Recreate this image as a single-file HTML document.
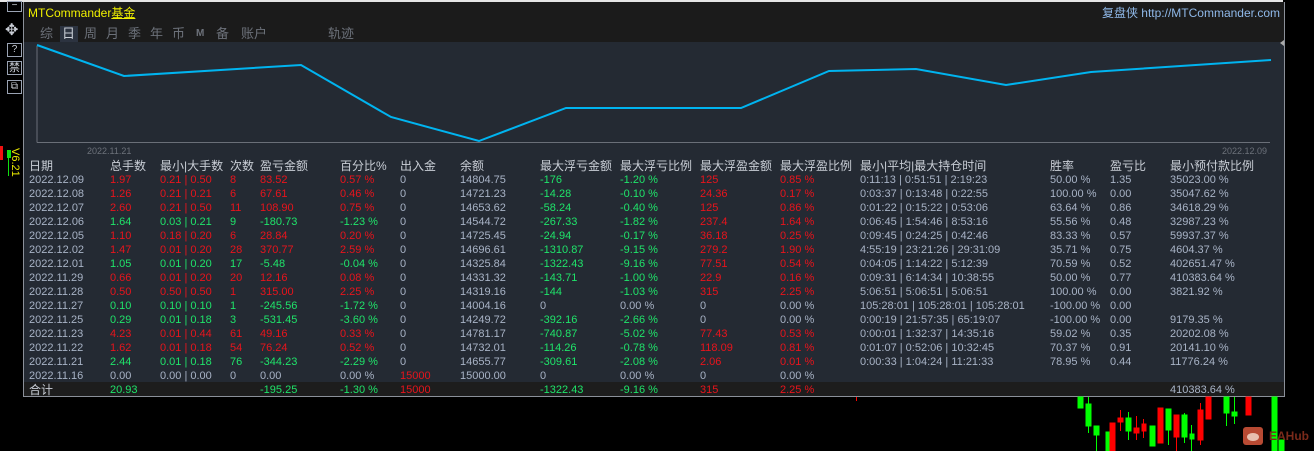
<!DOCTYPE html>
<html><head><meta charset="utf-8"><style>
*{margin:0;padding:0}
body{width:1314px;height:451px;background:#000;position:relative;overflow:hidden;font-family:"Liberation Sans","Noto Sans CJK SC",sans-serif;font-size:12px;}
.panel{position:absolute;left:23px;top:2px;width:1260px;height:394px;background:#242a33;border:1px solid #8b9099;border-top:none;}
.hdr{position:absolute;left:0;top:0;width:1260px;height:40px;background:#1b1b1b;}
.t{position:absolute;white-space:nowrap;line-height:14px;}
.r{color:#e8141c}.g{color:#1fe46a}.w{color:#a8b3c6}.h{color:#c9ced6}
.row{position:absolute;left:0;width:1260px;height:14px;font-size:11px}
.row.h{font-size:12px}
.row span{position:absolute;top:0;white-space:nowrap;line-height:14px}
.tot{position:absolute;left:0;top:380px;width:1260px;height:14px;background:#1d1d1d}
.ic{position:absolute;left:7px;width:13px;height:12px;border:1px solid #9aa3b3;color:#c8ccd4;font-size:10px;line-height:12px;text-align:center}
</style></head><body>
<div style="position:absolute;left:0;top:0;width:1314px;height:2px;background:#e6e6e6"></div>
<div style="position:absolute;left:1283px;top:0;width:31px;height:2px;background:#000"></div>
<div class="ic" style="top:1px;height:9px;line-height:8px">−</div>
<div class="t" style="left:5px;top:24px;color:#c8ccd4;font-size:16px">✥</div>
<div class="ic" style="top:43px">?</div>
<div class="ic" style="top:61px;font-size:11px">禁</div>
<div class="ic" style="top:80px">⧉</div>
<div style="position:absolute;left:0;top:146px;width:3px;height:14px;background:#f01010"></div>
<div style="position:absolute;left:7px;top:150px;width:4px;height:8px;background:#10e010"></div>
<div style="position:absolute;left:8px;top:158px;width:1px;height:18px;background:#10e010"></div>
<div class="t" style="left:22px;top:148px;color:#e8e800;font-size:11px;transform:rotate(90deg);transform-origin:0 0">V6.21</div>

<div class="panel">
 <div class="hdr">
  <div class="t" style="left:4px;top:4px;color:#f0f000">MTCommander<span style="text-decoration:underline">基金</span></div>
  <div class="t" style="right:4px;top:4px;color:#8fb8e8">复盘侠 http://MTCommander.com</div>
  <div class="t" style="left:16px;top:25px;color:#6c717a;font-size:13px">综</div>
  <div style="position:absolute;left:36px;top:24px;width:18px;height:16px;background:#2c3340"></div>
  <div class="t" style="left:38px;top:25px;color:#c9ced6;font-size:13px">日</div>
  <div class="t" style="left:60px;top:25px;color:#6c717a;font-size:13px">周</div>
  <div class="t" style="left:82px;top:25px;color:#6c717a;font-size:13px">月</div>
  <div class="t" style="left:104px;top:25px;color:#6c717a;font-size:13px">季</div>
  <div class="t" style="left:126px;top:25px;color:#6c717a;font-size:13px">年</div>
  <div class="t" style="left:148px;top:25px;color:#6c717a;font-size:13px">币</div>
  <div class="t" style="left:172px;top:25px;color:#6c717a;font-size:10px;font-weight:bold">M</div>
  <div class="t" style="left:192px;top:25px;color:#6c717a;font-size:13px">备</div>
  <div class="t" style="left:217px;top:25px;color:#6c717a;font-size:13px">账户</div>
  <div class="t" style="left:304px;top:25px;color:#6c717a;font-size:13px">轨迹</div>
 </div>
 <svg style="position:absolute;left:0;top:0" width="1260" height="160">
  <line x1="13" y1="44" x2="13" y2="140.5" stroke="#6a6f78"/>
  <line x1="13" y1="140.5" x2="1246" y2="140.5" stroke="#6a6f78"/>
  <polyline fill="none" stroke="#00b4f0" stroke-width="2" points="13,43 100,74 277,63 367,115 455,139 542,106 717,106 805,69 892,67 982,83 1067,70 1247,58"/>
  <path d="M1260 38 L1256 41 L1260 44Z" fill="#aaa"/>
 </svg>
 <div class="t" style="left:63px;top:142px;color:#6c717a;font-size:9px">2022.11.21</div>
 <div class="t" style="left:1198px;top:142px;color:#6c717a;font-size:9px">2022.12.09</div>

 <div class="row h" style="top:157px">
  <span style="left:5px">日期</span><span style="left:86px">总手数</span><span style="left:136px">最小|大手数</span><span style="left:206px">次数</span><span style="left:236px">盈亏金额</span><span style="left:316px">百分比%</span><span style="left:376px">出入金</span><span style="left:436px">余额</span><span style="left:516px">最大浮亏金额</span><span style="left:596px">最大浮亏比例</span><span style="left:676px">最大浮盈金额</span><span style="left:756px">最大浮盈比例</span><span style="left:836px">最小|平均|最大持仓时间</span><span style="left:1026px">胜率</span><span style="left:1086px">盈亏比</span><span style="left:1146px">最小预付款比例</span>
 </div>
 <div class="row w" style="top:171px"><span style="left:5px">2022.12.09</span><span class="r" style="left:86px">1.97</span><span class="r" style="left:136px">0.21 | 0.50</span><span class="r" style="left:206px">8</span><span class="r" style="left:236px">83.52</span><span class="r" style="left:316px">0.57 %</span><span style="left:376px">0</span><span style="left:436px">14804.75</span><span class="g" style="left:516px">-176</span><span class="g" style="left:596px">-1.20 %</span><span class="r" style="left:676px">125</span><span class="r" style="left:756px">0.85 %</span><span style="left:836px">0:11:13 | 0:51:51 | 2:19:23</span><span style="left:1026px">50.00 %</span><span style="left:1086px">1.35</span><span style="left:1146px">35023.00 %</span></div>
 <div class="row w" style="top:185px"><span style="left:5px">2022.12.08</span><span class="r" style="left:86px">1.26</span><span class="r" style="left:136px">0.21 | 0.21</span><span class="r" style="left:206px">6</span><span class="r" style="left:236px">67.61</span><span class="r" style="left:316px">0.46 %</span><span style="left:376px">0</span><span style="left:436px">14721.23</span><span class="g" style="left:516px">-14.28</span><span class="g" style="left:596px">-0.10 %</span><span class="r" style="left:676px">24.36</span><span class="r" style="left:756px">0.17 %</span><span style="left:836px">0:03:37 | 0:13:48 | 0:22:55</span><span style="left:1026px">100.00 %</span><span style="left:1086px">0.00</span><span style="left:1146px">35047.62 %</span></div>
 <div class="row w" style="top:199px"><span style="left:5px">2022.12.07</span><span class="r" style="left:86px">2.60</span><span class="r" style="left:136px">0.21 | 0.50</span><span class="r" style="left:206px">11</span><span class="r" style="left:236px">108.90</span><span class="r" style="left:316px">0.75 %</span><span style="left:376px">0</span><span style="left:436px">14653.62</span><span class="g" style="left:516px">-58.24</span><span class="g" style="left:596px">-0.40 %</span><span class="r" style="left:676px">125</span><span class="r" style="left:756px">0.86 %</span><span style="left:836px">0:01:22 | 0:15:22 | 0:53:06</span><span style="left:1026px">63.64 %</span><span style="left:1086px">0.86</span><span style="left:1146px">34618.29 %</span></div>
 <div class="row w" style="top:213px"><span style="left:5px">2022.12.06</span><span class="g" style="left:86px">1.64</span><span class="g" style="left:136px">0.03 | 0.21</span><span class="g" style="left:206px">9</span><span class="g" style="left:236px">-180.73</span><span class="g" style="left:316px">-1.23 %</span><span style="left:376px">0</span><span style="left:436px">14544.72</span><span class="g" style="left:516px">-267.33</span><span class="g" style="left:596px">-1.82 %</span><span class="r" style="left:676px">237.4</span><span class="r" style="left:756px">1.64 %</span><span style="left:836px">0:06:45 | 1:54:46 | 8:53:16</span><span style="left:1026px">55.56 %</span><span style="left:1086px">0.48</span><span style="left:1146px">32987.23 %</span></div>
 <div class="row w" style="top:227px"><span style="left:5px">2022.12.05</span><span class="r" style="left:86px">1.10</span><span class="r" style="left:136px">0.18 | 0.20</span><span class="r" style="left:206px">6</span><span class="r" style="left:236px">28.84</span><span class="r" style="left:316px">0.20 %</span><span style="left:376px">0</span><span style="left:436px">14725.45</span><span class="g" style="left:516px">-24.94</span><span class="g" style="left:596px">-0.17 %</span><span class="r" style="left:676px">36.18</span><span class="r" style="left:756px">0.25 %</span><span style="left:836px">0:09:45 | 0:24:25 | 0:42:46</span><span style="left:1026px">83.33 %</span><span style="left:1086px">0.57</span><span style="left:1146px">59937.37 %</span></div>
 <div class="row w" style="top:241px"><span style="left:5px">2022.12.02</span><span class="r" style="left:86px">1.47</span><span class="r" style="left:136px">0.01 | 0.20</span><span class="r" style="left:206px">28</span><span class="r" style="left:236px">370.77</span><span class="r" style="left:316px">2.59 %</span><span style="left:376px">0</span><span style="left:436px">14696.61</span><span class="g" style="left:516px">-1310.87</span><span class="g" style="left:596px">-9.15 %</span><span class="r" style="left:676px">279.2</span><span class="r" style="left:756px">1.90 %</span><span style="left:836px">4:55:19 | 23:21:26 | 29:31:09</span><span style="left:1026px">35.71 %</span><span style="left:1086px">0.75</span><span style="left:1146px">4604.37 %</span></div>
 <div class="row w" style="top:255px"><span style="left:5px">2022.12.01</span><span class="g" style="left:86px">1.05</span><span class="g" style="left:136px">0.01 | 0.20</span><span class="g" style="left:206px">17</span><span class="g" style="left:236px">-5.48</span><span class="g" style="left:316px">-0.04 %</span><span style="left:376px">0</span><span style="left:436px">14325.84</span><span class="g" style="left:516px">-1322.43</span><span class="g" style="left:596px">-9.16 %</span><span class="r" style="left:676px">77.51</span><span class="r" style="left:756px">0.54 %</span><span style="left:836px">0:04:05 | 1:14:22 | 5:12:39</span><span style="left:1026px">70.59 %</span><span style="left:1086px">0.52</span><span style="left:1146px">402651.47 %</span></div>
 <div class="row w" style="top:269px"><span style="left:5px">2022.11.29</span><span class="r" style="left:86px">0.66</span><span class="r" style="left:136px">0.01 | 0.20</span><span class="r" style="left:206px">20</span><span class="r" style="left:236px">12.16</span><span class="r" style="left:316px">0.08 %</span><span style="left:376px">0</span><span style="left:436px">14331.32</span><span class="g" style="left:516px">-143.71</span><span class="g" style="left:596px">-1.00 %</span><span class="r" style="left:676px">22.9</span><span class="r" style="left:756px">0.16 %</span><span style="left:836px">0:09:31 | 6:14:34 | 10:38:55</span><span style="left:1026px">50.00 %</span><span style="left:1086px">0.77</span><span style="left:1146px">410383.64 %</span></div>
 <div class="row w" style="top:283px"><span style="left:5px">2022.11.28</span><span class="r" style="left:86px">0.50</span><span class="r" style="left:136px">0.50 | 0.50</span><span class="r" style="left:206px">1</span><span class="r" style="left:236px">315.00</span><span class="r" style="left:316px">2.25 %</span><span style="left:376px">0</span><span style="left:436px">14319.16</span><span class="g" style="left:516px">-144</span><span class="g" style="left:596px">-1.03 %</span><span class="r" style="left:676px">315</span><span class="r" style="left:756px">2.25 %</span><span style="left:836px">5:06:51 | 5:06:51 | 5:06:51</span><span style="left:1026px">100.00 %</span><span style="left:1086px">0.00</span><span style="left:1146px">3821.92 %</span></div>
 <div class="row w" style="top:297px"><span style="left:5px">2022.11.27</span><span class="g" style="left:86px">0.10</span><span class="g" style="left:136px">0.10 | 0.10</span><span class="g" style="left:206px">1</span><span class="g" style="left:236px">-245.56</span><span class="g" style="left:316px">-1.72 %</span><span style="left:376px">0</span><span style="left:436px">14004.16</span><span style="left:516px">0</span><span style="left:596px">0.00 %</span><span style="left:676px">0</span><span style="left:756px">0.00 %</span><span style="left:836px">105:28:01 | 105:28:01 | 105:28:01</span><span style="left:1026px">-100.00 %</span><span style="left:1086px">0.00</span></div>
 <div class="row w" style="top:311px"><span style="left:5px">2022.11.25</span><span class="g" style="left:86px">0.29</span><span class="g" style="left:136px">0.01 | 0.18</span><span class="g" style="left:206px">3</span><span class="g" style="left:236px">-531.45</span><span class="g" style="left:316px">-3.60 %</span><span style="left:376px">0</span><span style="left:436px">14249.72</span><span class="g" style="left:516px">-392.16</span><span class="g" style="left:596px">-2.66 %</span><span style="left:676px">0</span><span style="left:756px">0.00 %</span><span style="left:836px">0:00:19 | 21:57:35 | 65:19:07</span><span style="left:1026px">-100.00 %</span><span style="left:1086px">0.00</span><span style="left:1146px">9179.35 %</span></div>
 <div class="row w" style="top:325px"><span style="left:5px">2022.11.23</span><span class="r" style="left:86px">4.23</span><span class="r" style="left:136px">0.01 | 0.44</span><span class="r" style="left:206px">61</span><span class="r" style="left:236px">49.16</span><span class="r" style="left:316px">0.33 %</span><span style="left:376px">0</span><span style="left:436px">14781.17</span><span class="g" style="left:516px">-740.87</span><span class="g" style="left:596px">-5.02 %</span><span class="r" style="left:676px">77.43</span><span class="r" style="left:756px">0.53 %</span><span style="left:836px">0:00:01 | 1:32:37 | 14:35:16</span><span style="left:1026px">59.02 %</span><span style="left:1086px">0.35</span><span style="left:1146px">20202.08 %</span></div>
 <div class="row w" style="top:339px"><span style="left:5px">2022.11.22</span><span class="r" style="left:86px">1.62</span><span class="r" style="left:136px">0.01 | 0.18</span><span class="r" style="left:206px">54</span><span class="r" style="left:236px">76.24</span><span class="r" style="left:316px">0.52 %</span><span style="left:376px">0</span><span style="left:436px">14732.01</span><span class="g" style="left:516px">-114.26</span><span class="g" style="left:596px">-0.78 %</span><span class="r" style="left:676px">118.09</span><span class="r" style="left:756px">0.81 %</span><span style="left:836px">0:01:07 | 0:52:06 | 10:32:45</span><span style="left:1026px">70.37 %</span><span style="left:1086px">0.91</span><span style="left:1146px">20141.10 %</span></div>
 <div class="row w" style="top:353px"><span style="left:5px">2022.11.21</span><span class="g" style="left:86px">2.44</span><span class="g" style="left:136px">0.01 | 0.18</span><span class="g" style="left:206px">76</span><span class="g" style="left:236px">-344.23</span><span class="g" style="left:316px">-2.29 %</span><span style="left:376px">0</span><span style="left:436px">14655.77</span><span class="g" style="left:516px">-309.61</span><span class="g" style="left:596px">-2.08 %</span><span class="r" style="left:676px">2.06</span><span class="r" style="left:756px">0.01 %</span><span style="left:836px">0:00:33 | 1:04:24 | 11:21:33</span><span style="left:1026px">78.95 %</span><span style="left:1086px">0.44</span><span style="left:1146px">11776.24 %</span></div>
 <div class="row w" style="top:367px"><span style="left:5px">2022.11.16</span><span style="left:86px">0.00</span><span style="left:136px">0.00 | 0.00</span><span style="left:206px">0</span><span style="left:236px">0.00</span><span style="left:316px">0.00 %</span><span class="r" style="left:376px">15000</span><span style="left:436px">15000.00</span><span style="left:516px">0</span><span style="left:596px">0.00 %</span><span style="left:676px">0</span><span style="left:756px">0.00 %</span></div>
 <div class="tot"></div>
 <div class="row w" style="top:381px"><span class="h" style="left:5px;font-size:12px">合计</span><span class="g" style="left:86px">20.93</span><span class="g" style="left:236px">-195.25</span><span class="g" style="left:316px">-1.30 %</span><span class="r" style="left:376px">15000</span><span class="g" style="left:516px">-1322.43</span><span class="g" style="left:596px">-9.16 %</span><span class="r" style="left:676px">315</span><span class="r" style="left:756px">2.25 %</span><span style="left:1146px">410383.64 %</span></div>
</div>

<svg style="position:absolute;left:0;top:0" width="1314" height="451">
 <g fill="#00ff00" stroke="#00ff00">
  <rect x="1078" y="397" width="5" height="11"/><rect x="1086" y="404" width="5" height="22"/><line x1="1088.5" y1="397" x2="1088.5" y2="433"/>
  <rect x="1094" y="426" width="5" height="9"/><line x1="1096.5" y1="426" x2="1096.5" y2="451"/>
  <rect x="1106" y="432" width="5" height="19"/>
  <rect x="1126" y="418" width="5" height="13"/><line x1="1128.5" y1="412" x2="1128.5" y2="440"/>
  <rect x="1150" y="426" width="5" height="20"/>
  <rect x="1166" y="409" width="5" height="21"/><line x1="1168.5" y1="409" x2="1168.5" y2="445"/>
  <rect x="1182" y="415" width="5" height="22"/><line x1="1184.5" y1="413" x2="1184.5" y2="443"/>
  <rect x="1190" y="434" width="4" height="5"/><line x1="1191.5" y1="425" x2="1191.5" y2="451"/>
  <rect x="1224" y="397" width="5" height="16"/><line x1="1226.5" y1="397" x2="1226.5" y2="426"/>
  <rect x="1232" y="412" width="5" height="4"/><line x1="1234.5" y1="397" x2="1234.5" y2="424"/>
  <rect x="1272" y="397" width="5" height="54"/><rect x="1279" y="440" width="5" height="11"/>
 </g>
 <g fill="#ff0000" stroke="#ff0000">
  <rect x="1110" y="423" width="5" height="28"/>
  <rect x="1118" y="418" width="5" height="4"/><line x1="1120.5" y1="410" x2="1120.5" y2="431"/>
  <rect x="1134" y="428" width="5" height="5"/><line x1="1136.5" y1="416" x2="1136.5" y2="440"/>
  <rect x="1142" y="424" width="4" height="7"/><line x1="1143.5" y1="419" x2="1143.5" y2="438"/>
  <rect x="1158" y="408" width="5" height="35"/>
  <rect x="1174" y="415" width="5" height="22"/><line x1="1176.5" y1="415" x2="1176.5" y2="451"/>
  <rect x="1198" y="410" width="5" height="30"/><line x1="1200.5" y1="403" x2="1200.5" y2="445"/>
  <rect x="1206" y="397" width="5" height="22"/>
  <rect x="1246" y="397" width="5" height="18"/>
  <line x1="856.5" y1="397" x2="856.5" y2="401"/>
 </g>
 <rect x="1243" y="427" width="20" height="18" rx="3" fill="#b84a33"/>
 <ellipse cx="1253" cy="437" rx="6" ry="4" fill="#e8c0b0"/>
</svg>
<div class="t" style="left:1269px;top:429px;color:#7a2a1a;font-weight:bold;font-size:12px">EAHub</div>
</body></html>
